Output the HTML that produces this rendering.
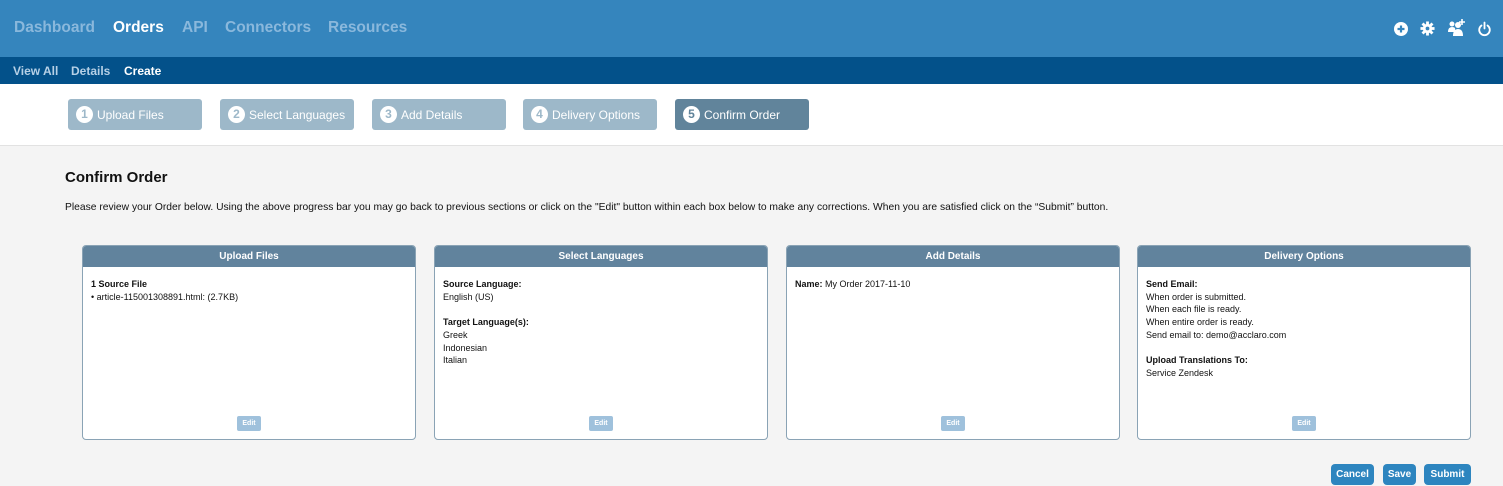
<!DOCTYPE html>
<html><head><style>
*{margin:0;padding:0;box-sizing:border-box}
body{width:1503px;height:486px;overflow:hidden;background:#f4f4f4;font-family:"Liberation Sans",sans-serif;position:relative}
.top{position:absolute;left:0;top:0;width:1503px;height:57px;background:#3585bd}
.top span{position:absolute;top:19px;font-size:15.5px;font-weight:bold;color:#8ab8dc}
.sub{position:absolute;top:57px;left:0;width:1503px;height:27px;background:#03518a}
.sub span{position:absolute;top:7px;font-size:12px;font-weight:bold;color:#b6d0e6}
.steps{position:absolute;top:84px;left:0;width:1503px;height:62px;background:#fff;border-bottom:1px solid #e2e2e2}
.st{position:absolute;top:15px;width:134px;height:31px;background:#9db8c9;border-radius:3px;color:#fff;font-size:12px;display:flex;align-items:center;padding-left:8px}
.st b{display:inline-block;width:17px;height:17px;border-radius:50%;background:#fff;color:#9db8c9;text-align:center;line-height:17px;font-size:12px;margin-right:4px}
.st.a{background:#61849b}.st.a b{color:#61849b}
h2{position:absolute;left:65px;top:169px;font-size:15px;color:#111}
.p{position:absolute;left:65px;top:202px;font-size:10.3px;color:#111;white-space:nowrap}
.card{position:absolute;top:245px;width:334px;height:195px;background:#fff;border:1px solid #8aa3b5;border-radius:4px;overflow:hidden}
.card .h{height:21px;background:#61839d;color:#fff;font-size:10px;font-weight:bold;text-align:center;line-height:21px}
.card .c{padding:11px 8px;font-size:9px;line-height:12.7px;color:#111}
.e{position:absolute;left:50%;margin-left:-12px;top:170px;width:24px;height:15px;background:#9fc1dc;color:#fff;font-size:7px;font-weight:bold;text-align:center;line-height:15px;border-radius:2px}
.btn{position:absolute;top:464px;height:21px;background:#2d85bf;color:#fff;font-size:10px;font-weight:bold;line-height:21px;text-align:center;border-radius:4px}
</style></head><body>
<div class="top">
<span style="left:14px">Dashboard</span><span style="left:113px;color:#fff">Orders</span><span style="left:182px">API</span><span style="left:225px">Connectors</span><span style="left:328px">Resources</span>
<svg style="position:absolute;left:1393px;top:21px" width="16" height="16" viewBox="0 0 16 16"><circle cx="8" cy="8" r="7" fill="#fff"/><path d="M8 4.5v7M4.5 8h7" stroke="#3585bd" stroke-width="2.2"/></svg>
<svg style="position:absolute;left:1420px;top:21px" width="15" height="15" viewBox="0 0 16 16"><g fill="#fff"><circle cx="8" cy="8" r="5"/><rect x="6.5" y="0.5" width="3" height="15"/><rect x="0.5" y="6.5" width="15" height="3"/><rect x="6.5" y="0.5" width="3" height="15" transform="rotate(45 8 8)"/><rect x="6.5" y="0.5" width="3" height="15" transform="rotate(-45 8 8)"/></g><circle cx="8" cy="8" r="2" fill="#3585bd"/></svg>
<svg style="position:absolute;left:1447px;top:18px" width="20" height="19" viewBox="0 0 20 19"><g fill="#fff"><circle cx="5" cy="6" r="2.5"/><circle cx="11" cy="7" r="3"/><path d="M1 14q0-5 4-5t3 3v2z"/><path d="M6 18q0-7 5-7t5 7z"/><path d="M15 1v6M12 4h6" stroke="#fff" stroke-width="1.6"/></g></svg>
<svg style="position:absolute;left:1477px;top:21px" width="15" height="16" viewBox="0 0 15 16"><path d="M4.5 4.5a5.3 5.3 0 1 0 6 0M7.5 1.5v6" stroke="#fff" stroke-width="1.8" fill="none" stroke-linecap="round"/></svg>
</div>
<div class="sub"><span style="left:13px">View All</span><span style="left:71px">Details</span><span style="left:124px;color:#fff">Create</span></div>
<div class="steps">
<div class="st" style="left:68px"><b>1</b>Upload Files</div>
<div class="st" style="left:220px"><b>2</b>Select Languages</div>
<div class="st" style="left:372px"><b>3</b>Add Details</div>
<div class="st" style="left:523px"><b>4</b>Delivery Options</div>
<div class="st a" style="left:675px"><b>5</b>Confirm Order</div>
</div>
<h2>Confirm Order</h2>
<div class="p">Please review your Order below. Using the above progress bar you may go back to previous sections or click on the "Edit" button within each box below to make any corrections. When you are satisfied click on the “Submit” button.</div>
<div class="card" style="left:82px"><div class="h">Upload Files</div><div class="c"><b>1 Source File</b><br>• article-115001308891.html: (2.7KB)</div><div class="e">Edit</div></div>
<div class="card" style="left:434px"><div class="h">Select Languages</div><div class="c"><b>Source Language:</b><br>English (US)<br><br><b>Target Language(s):</b><br>Greek<br>Indonesian<br>Italian</div><div class="e">Edit</div></div>
<div class="card" style="left:786px"><div class="h">Add Details</div><div class="c"><b>Name:</b> My Order 2017-11-10</div><div class="e">Edit</div></div>
<div class="card" style="left:1137px"><div class="h">Delivery Options</div><div class="c"><b>Send Email:</b><br>When order is submitted.<br>When each file is ready.<br>When entire order is ready.<br>Send email to: demo@acclaro.com<br><br><b>Upload Translations To:</b><br>Service Zendesk</div><div class="e">Edit</div></div>
<div class="btn" style="left:1331px;width:43px">Cancel</div>
<div class="btn" style="left:1383px;width:33px">Save</div>
<div class="btn" style="left:1424px;width:47px">Submit</div>
</body></html>
